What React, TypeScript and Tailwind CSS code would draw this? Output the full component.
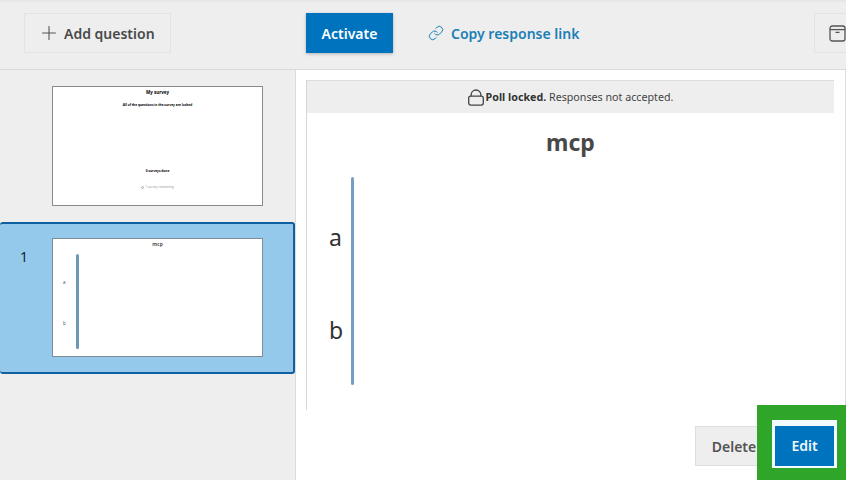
import React from "react";
import { Link, Plus } from "lucide-react";

const LockIcon: React.FC = () => (
  <svg width="16" height="17" viewBox="0 0 16 17" fill="none" stroke="#444" strokeWidth="1.3">
    <rect x="0.7" y="7.2" width="14.6" height="8.9" rx="2" />
    <path d="M3.2 7.2 V5.6 a4.8 4.6 0 0 1 9.6 0 V7.2" />
  </svg>
);

const ArchiveIcon: React.FC = () => (
  <svg width="17" height="17" viewBox="0 0 17 17" fill="none" stroke="#555" strokeWidth="1.3">
    <rect x="1" y="1" width="15" height="15" rx="2.2" />
    <path d="M1 4.6 H16" />
    <path d="M6.5 7.4 H10.5" />
  </svg>
);

const SurveyThumb: React.FC = () => (
  <div className="flex h-[120px] w-[211px] flex-col items-center border border-[#8a8a8a] bg-white font-bold text-black">
    <div className="mt-[2px] text-[4.5px] leading-[6px]">My survey</div>
    <div className="mt-[8px] text-[3.2px] leading-[5px]">All of the questions in the survey are locked</div>
    <div className="mt-[61px] text-[3.2px] leading-[5px]">0 surveys done</div>
    <div className="mt-[11px] flex items-center gap-[1px] text-[3.2px] font-normal leading-[5px] text-[#999]">
      <span className="size-[3px] rounded-full border-[0.5px] border-[#aaa]" />
      1 survey remaining
    </div>
  </div>
);

const QuestionThumb: React.FC = () => (
  <div className="flex h-[119px] w-[211px] flex-col border border-[#7f8c96] bg-white">
    <div className="text-center text-[5px] font-bold leading-[10px] text-[#555]">mcp</div>
    <div className="mt-[5px] flex h-[95px] pl-[10px]">
      <div className="flex w-[13px] flex-col gap-[35px] pt-[25px] text-[4.5px] leading-[6px] text-[#555]">
        <span>a</span>
        <span>b</span>
      </div>
      <div className="w-[3px] rounded-full bg-[#6b98b5]" />
    </div>
  </div>
);

export default function App() {
  return (
    <div className="relative flex h-[480px] w-[846px] flex-col overflow-hidden bg-white font-['Noto_Sans',sans-serif]">
      <header className="flex h-[70px] shrink-0 items-start border-b border-[#d9d9d9] bg-gradient-to-b from-[#e4e4e4] from-0% via-[#eeeeee] via-[5%] to-[#eeeeee] pt-[13px] pl-[24px]">
        <button className="flex h-[40px] w-[147px] shrink-0 items-center gap-[4px] border border-[#e3e3e3] pl-[13px] text-[14px] font-semibold whitespace-nowrap text-[#4a4a4a]">
          <Plus size={22} strokeWidth={1.2} className="text-[#555]" />
          Add question
        </button>
        <button className="ml-[135px] h-[40px] w-[87px] shrink-0 bg-[#0073bf] text-[14px] font-semibold text-white shadow-[0_1px_3px_rgba(0,0,0,0.25)]">
          Activate
        </button>
        <a className="ml-[35px] flex h-[40px] w-[155px] shrink-0 items-center gap-[7px] text-[14px] font-semibold whitespace-nowrap text-[#1a7fb5]">
          <Link size={16} strokeWidth={1.5} />
          Copy response link
        </a>
        <button className="ml-[231px] flex h-[40px] w-[50px] shrink-0 items-center border border-[#e3e3e3] pl-[14px]">
          <ArchiveIcon />
        </button>
      </header>

      <div className="flex min-h-0 flex-1">
        <aside className="flex w-[296px] shrink-0 flex-col border-r border-[#dcdcdc] bg-[#eeeeee]">
          <div className="mt-[16px] pl-[52px]">
            <SurveyThumb />
          </div>
          <div className="mt-[16px] flex h-[152px] rounded-[3px] border-y-2 border-r-2 border-[#10609f] bg-[#95c9ec] pt-[14px]">
            <div className="w-[52px] pl-[20px] pt-[9px] text-[14px] leading-[20px] text-[#10253a]">1</div>
            <QuestionThumb />
          </div>
        </aside>

        <main className="flex min-w-0 flex-1 flex-col border-r border-[#dddddd] bg-white pl-[10px] pt-[10px]">
          <div className="flex h-[330px] w-[528px] shrink-0 flex-col border-l border-[#d6d6d6]">
            <div className="flex h-[33px] items-center justify-center gap-[2px] border-t border-[#dcdcdc] bg-[#eeeeee] text-[10.7px] text-[#444]">
              <LockIcon />
              <span>
                <b className="font-bold text-[#333]">Poll locked.</b> Responses not accepted.
              </span>
            </div>
            <h1 className="mt-[13px] text-center text-[23px] font-bold leading-[32px] text-[#484848]">mcp</h1>
            <div className="mt-[19px] flex h-[208px] pl-[22px]">
              <div className="flex w-[22px] flex-col gap-[63px] pt-[45px] text-[23px] leading-[30px] text-[#333]">
                <span>a</span>
                <span>b</span>
              </div>
              <div className="w-[3px] rounded-full bg-[#739fc4]" />
            </div>
          </div>
          <div className="mt-[16px] flex justify-end pr-[11px]">
            <button className="h-[40px] w-[80px] border border-[#dedede] bg-[#eeeeee] pr-[2px] text-[14px] font-semibold text-[#555]">
              Delete
            </button>
            <button className="h-[40px] w-[59px] bg-[#0073bf] text-[14px] font-semibold text-white">Edit</button>
          </div>
        </main>
      </div>

      {/* green highlight round the edit button */}
      <div className="absolute right-0 bottom-0 h-[75px] w-[89px] bg-[#2fa52a] pt-[15px] pl-[15px]">
        <div className="h-[48px] w-[65px] border-x-[3px] border-t-[6px] border-b-[2px] border-[#f2fbff] bg-[#0073bf] text-center text-[14px] font-semibold leading-[40px] text-[#eef8ff]">
          Edit
        </div>
      </div>
    </div>
  );
}
